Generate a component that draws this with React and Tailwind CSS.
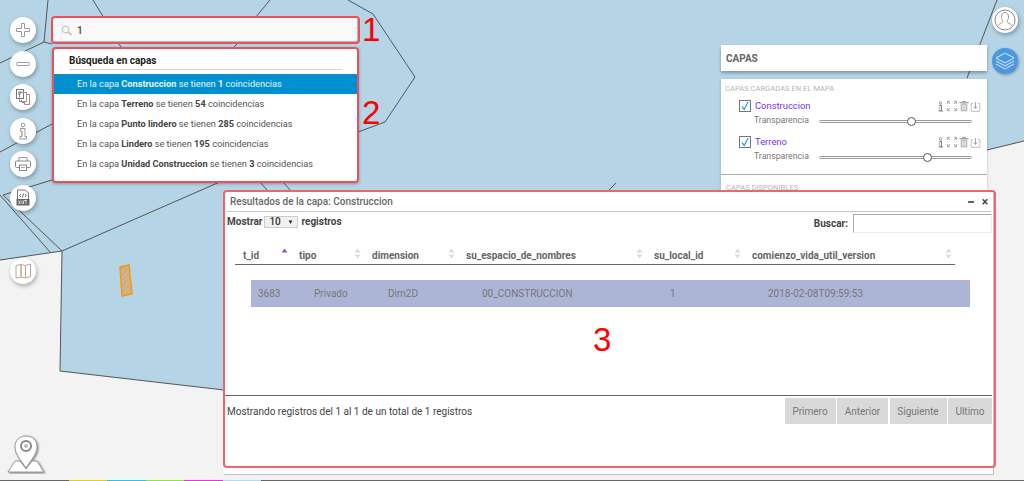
import React from "react";

const MapLines = () => (
  <svg className="absolute inset-0" width="1024" height="481" viewBox="0 0 1024 481">
    <defs>
      <pattern id="hatch" width="4" height="4" patternUnits="userSpaceOnUse" patternTransform="rotate(45)">
        <rect width="4" height="4" fill="#d3b489" />
        <rect width="1" height="4" fill="#cda878" />
      </pattern>
    </defs>
    <polygon points="0,0 1024,0 1024,141 980,152 980,420 224,390 60,371 62,251 0,260" fill="#b5d4e5" />
    <g fill="none" stroke="#555" strokeWidth="1">
      <polyline points="48,0 44,42 0,63" />
      <polyline points="44,42 52,44" />
      <polyline points="93,0 104,18" />
      <polyline points="270,0 255,18" />
      <polyline points="118,43 122,48" />
      <polyline points="238,43 233,48" />
      <polyline points="348,0 373,14 415,77 385,122 358,132" />
      <polyline points="52,124 0,152" />
      <polyline points="52,180 3,195 62,251 222,181" />
      <polyline points="0,195 50,252" />
      <polyline points="0,260 62,251 60,371 224,390" />
      <polyline points="260,182 267,190" />
      <polyline points="283,182 290,190" />
      <polyline points="608,191 616,183" />
      <polyline points="997,0 967,78" />
      <polyline points="987,150 1024,141" />
    </g>
    <polygon points="120,267 129,265 132,294 122,296" fill="url(#hatch)" stroke="#f59a16" strokeWidth="1.500" />
  </svg>
);

const Ic = ({ children, size = 18 }) => (
  <svg width={size} height={size} viewBox="0 0 18 18" fill="none" strokeWidth="1" className="shrink-0">
    {children}
  </svg>
);

const RoundBtn = ({ children, className = "" }) => (
  <div className={`w-[26px] h-[26px] rounded-full bg-white shadow-[1px_2px_4px_rgba(0,0,0,0.3)] flex items-center justify-center ${className}`}>
    {children}
  </div>
);

const LeftTools = () => (
  <div className="absolute left-[10px] top-[17px] flex flex-col gap-[7.6px]">
    <RoundBtn>
      <Ic><path d="M7.500 2.500h3v5h5v3h-5v5h-3v-5h-5v-3h5z" stroke="#9a9a9a" /></Ic>
    </RoundBtn>
    <RoundBtn>
      <Ic><rect x="2.500" y="7.500" width="13" height="3" rx="1" stroke="#9a9a9a" /></Ic>
    </RoundBtn>
    <RoundBtn>
      <Ic>
        <rect x="2.500" y="1.500" width="7" height="9" stroke="#777" />
        <rect x="5.500" y="4.500" width="7" height="9" stroke="#999" />
        <path d="M12.500 6.500h3v10h-5v-3" stroke="#d9776f" />
        <path d="M4 4h4M4 6h3" stroke="#888" />
        <path d="M7 12l2 3 2-1" stroke="#777" />
      </Ic>
    </RoundBtn>
    <RoundBtn>
      <Ic>
        <circle cx="9" cy="3" r="1.800" stroke="#999" />
        <path d="M6.500 6.500h4.500v8h1.500v2.500h-6.500v-2.500h2v-5.500h-1.500z" stroke="#999" />
        <path d="M7.500 10v4" stroke="#e3a36a" />
      </Ic>
    </RoundBtn>
    <RoundBtn>
      <Ic>
        <path d="M5 6V2.500h8V6" stroke="#999" />
        <rect x="1.500" y="6" width="15" height="6.500" rx="1" stroke="#888" />
        <rect x="5.500" y="10" width="7" height="5.500" fill="#fff" stroke="#888" />
        <path d="M7 12.500h4" stroke="#aaa" />
      </Ic>
    </RoundBtn>
    <RoundBtn>
      <Ic>
        <path d="M3.500 1h8l3 3v9h-11z" stroke="#777" />
        <path d="M7 5L5.500 6.500 7 8M11 5l1.500 1.500L11 8M9.700 4.500L8.300 8.500" stroke="#666" />
        <rect x="2.500" y="10" width="13" height="6.500" fill="#666" />
        <path d="M4.500 11.500l2 3.500M6.500 11.500l-2 3.500M8 11.500v3.500M9.500 11.500v3.500M12 11.500v3.500M10 11.500h3" stroke="#fff" strokeWidth="0.700" />
      </Ic>
    </RoundBtn>
    <RoundBtn className="mt-[39px]">
      <Ic>
        <path d="M2 3.500l5-1v12.500l-5 1z" stroke="#aaa" />
        <path d="M7 2.500l4.500 1v12.500l-4.500-1z" stroke="#e3a36a" />
        <path d="M11.500 3.500l5-1.500v12.500l-5 1.500z" stroke="#aaa" />
      </Ic>
    </RoundBtn>
  </div>
);

const MapLogo = () => (
  <svg className="absolute left-[6px] top-[434px]" width="40" height="40" viewBox="0 0 40 40" fill="none">
    <g style={{ filter: "drop-shadow(1px 1px 1px rgba(0,0,0,0.45))" }}>
      <path d="M9 27L2 38h36l-7-11h-5l-6 8-6-8z" fill="#fff" stroke="#999" strokeWidth="1" />
      <path d="M20 34C16 27 9 21 9 12.500C9 6 14 2 20 2s11 4 11 10.500C31 21 24 27 20 34z" fill="#fff" stroke="#999" strokeWidth="1" />
      <circle cx="20" cy="12" r="5" fill="#fff" stroke="#888" strokeWidth="2" />
      <circle cx="20" cy="12" r="2" fill="#bbb" />
    </g>
  </svg>
);

const SearchBox = () => (
  <div className="absolute left-[51px] top-[16px] w-[309px] h-[28px] border-2 border-[#e9525c] rounded-[4px] bg-[#f9f9f9] shadow-[inset_-1px_-1px_1px_rgba(100,110,130,0.5)] flex items-center pl-[8px] gap-[5px]">
    <svg width="11" height="11" viewBox="0 0 11 11" fill="none" stroke="#c8c8c8" strokeWidth="1.300">
      <circle cx="4.500" cy="4.500" r="3.300" />
      <path d="M7 7l3.500 3" strokeWidth="2" />
    </svg>
    <span className="text-[10px] text-[#444] font-medium">1</span>
  </div>
);

const results = [
  ["Construccion", "1"],
  ["Terreno", "54"],
  ["Punto lindero", "285"],
  ["Lindero", "195"],
  ["Unidad Construccion", "3"],
];

const SearchResults = () => (
  <div className="absolute left-[52px] top-[47px] w-[307px] h-[136px] border-2 border-[#e9525c] rounded-[4px] bg-white shadow-[0_1px_3px_rgba(0,0,0,0.3)] flex flex-col">
    <div className="mx-[15px] h-[21px] pt-[2px] border-b border-[#d5d5d5] text-[10px] font-bold text-[#222] flex items-center">
      Búsqueda en capas
    </div>
    <div className="mt-[4px] flex flex-col">
      {results.map(([name, n], i) => (
        <div
          key={name}
          className={`h-[20px] pl-[23px] flex items-center whitespace-pre text-[9.2px] ${i === 0 ? "bg-[#0090d0] text-[#e8f4fb]" : "text-[#555]"}`}
        >
          En la capa <b className={i === 0 ? "" : "text-[#444]"}>{name}</b> se tienen <b className={i === 0 ? "" : "text-[#444]"}>{n}</b> coincidencias
        </div>
      ))}
    </div>
  </div>
);

const MiniIcons = () => (
  <div className="flex items-center justify-between w-[45px] mr-[7px] shrink-0">
    <Ic size={11}>
      <circle cx="9" cy="3" r="2" stroke="#999" strokeWidth="1.500" />
      <path d="M7 7h3.500v8M6 16h7" stroke="#888" strokeWidth="2" />
      <path d="M7 9v6" stroke="#e0b060" strokeWidth="1.500" />
    </Ic>
    <Ic size={12}>
      <path d="M2 6V2h4M12 2h4v4M16 12v4h-4M6 16H2v-4M3 3l3 3M15 3l-3 3M15 15l-3-3M3 15l3-3" stroke="#999" strokeWidth="1.300" />
    </Ic>
    <Ic size={12}>
      <path d="M2 4h14M7 4V2h4v2" stroke="#999" strokeWidth="1.500" />
      <path d="M4 5h10v12H4z" fill="#bbb" />
      <path d="M7 7v8M9 7v8M11 7v8" stroke="#fff" />
    </Ic>
    <Ic size={11}>
      <path d="M5 4H2v13h14V4h-3" stroke="#bbb" strokeWidth="1.500" />
      <path d="M9 2v10M6 9l3 3 3-3" stroke="#999" strokeWidth="1.500" />
    </Ic>
  </div>
);

const LayerRow = ({ name, thumb, className = "" }) => (
  <div className={`flex flex-col ${className}`}>
    <div className="h-[14px] flex items-center">
      <div className="ml-[18px] w-[12px] h-[12px] border border-[#777] bg-white flex items-center justify-center shrink-0">
        <svg width="10" height="10" viewBox="0 0 10 10" fill="none" stroke="#2aa6ea" strokeWidth="1.300">
          <path d="M2 5.500l2.200 3L8 1" />
        </svg>
      </div>
      <span className="ml-[4px] flex-1 text-[9.4px] text-[#7a2ff5]">{name}</span>
      <MiniIcons />
    </div>
    <div className="h-[14px] mt-[1px] flex items-center">
      <span className="ml-[33px] w-[65px] text-[8.7px] text-[#777]">Transparencia</span>
      <div className="relative w-[153px] h-[3px] rounded-full border border-[#999] bg-white">
        <div
          className="absolute top-[-4px] w-[9px] h-[9px] rounded-full border border-[#555] bg-white"
          style={{ left: thumb }}
        />
      </div>
    </div>
  </div>
);

const CapasPanel = () => (
  <div className="absolute left-[721px] top-[45px] w-[266px] flex flex-col gap-[8px]">
    <div className="h-[26px] bg-white shadow-[0_2px_3px_rgba(0,0,0,0.3)] flex items-center pl-[5px] text-[10px] font-bold text-[#666]">
      CAPAS
    </div>
    <div className="bg-white h-[145px] shadow-[0_1px_3px_rgba(0,0,0,0.2)] flex flex-col">
      <div className="h-[20px] pl-[4px] flex items-center text-[7.6px] text-[#b5b5b5]">CAPAS CARGADAS EN EL MAPA</div>
      <LayerRow name="Construccion" thumb="87px" />
      <LayerRow name="Terreno" thumb="103px" className="mt-[7px]" />
      <div className="mt-[10px] border-t border-[#aaa] pl-[5px] pt-[7px] text-[7.6px] text-[#b5b5b5]">CAPAS DISPONIBLES</div>
    </div>
  </div>
);

const UserBtn = () => (
  <div className="absolute left-[992px] top-[7px] flex flex-col gap-[15px]">
    <RoundBtn>
      <svg width="22" height="22" viewBox="0 0 22 22" fill="none">
        <circle cx="11" cy="11" r="10" stroke="#888" />
        <path d="M7.500 8c0-3 1.500-4.500 3.500-4.500S14.500 5 14.500 8c0 2-1 3.500-1.500 4.500 0 1.500 3.500 2 5 4" stroke="#999" />
        <path d="M7.500 8c0 2 1 3.500 1.500 4.500 0 1.500-3.500 2-5 4" stroke="#d9a070" />
      </svg>
    </RoundBtn>
    <div className="w-[26px] h-[26px] rounded-full bg-[#4a98e2] shadow-[1px_1px_3px_rgba(0,0,0,0.3)] flex items-center justify-center">
      <svg width="22" height="22" viewBox="0 0 22 22" fill="none" stroke="#dcebfa" strokeWidth="1">
        <path d="M11 3l9 5-9 5-9-5z" />
        <path d="M2 11l9 5 9-5" />
        <path d="M2 14l9 5 9-5" />
      </svg>
    </div>
  </div>
);

const Sort = ({ asc }) => (
  <svg width="7" height="11" viewBox="0 0 7 11" className="shrink-0">
    <path d="M3.500 0.500L6.500 4.500h-6z" fill={asc ? "#7a5fd0" : "#dcdcdc"} />
    {!asc && <path d="M3.500 10.500L6.500 6.500h-6z" fill="#dcdcdc" />}
  </svg>
);

const columns = [
  ["t_id", "3683"],
  ["tipo", "Privado"],
  ["dimension", "Dim2D"],
  ["su_espacio_de_nombres", "00_CONSTRUCCION"],
  ["su_local_id", "1"],
  ["comienzo_vida_util_version", "2018-02-08T09:59:53"],
];

const ResultsWindow = () => (
  <div className="absolute left-[224px] top-[191px] w-[770px] h-[284px] bg-white border-b border-r border-[#c0c0c0]">
    <div className="mx-[2px] h-[21px] pt-[1px] border-b border-[#c8c8c8] flex items-center justify-between pl-[4px] pr-[3px]">
      <span className="text-[10px] font-medium text-[#666]">Resultados de la capa: Construccion</span>
      <div className="flex items-center gap-[8px]">
        <div className="w-[6px] h-[2px] bg-[#666]" />
        <span className="text-[12px] leading-none font-bold text-[#444]">×</span>
      </div>
    </div>
    <div className="flex items-start justify-between pl-[3px] pr-[1px]">
      <div className="flex items-center mt-[3px] h-[13px] text-[10px] font-bold text-[#444]">
        Mostrar
        <div className="ml-[2px] w-[34px] h-[12px] border border-[#ccc] bg-[#f0f0f0] flex items-center justify-between px-[4px]">
          <span className="text-[10px] text-[#333] font-medium">10</span>
          <span className="text-[6px] text-[#222]">▼</span>
        </div>
        <span className="ml-[3px]">registros</span>
      </div>
      <div className="flex items-center mt-[2px] text-[10px] font-bold text-[#444]">
        Buscar:
        <div className="ml-[5px] w-[139px] h-[19px] border border-[#aaa] border-r-[#eee] border-b-[#eee] bg-white" />
      </div>
    </div>
    <div className="grid grid-cols-[56px_73px_94px_188px_98px_1fr] ml-[11px] w-[720px] mt-[15px] h-[17px] border-b border-[#666] text-[10px] font-bold text-[#666]">
      {columns.map(([h], i) => (
        <div key={h} className="pl-[8px] pr-[3px] flex items-start justify-between">
          <span>{h}</span>
          <Sort asc={i === 0} />
        </div>
      ))}
    </div>
    <div className="grid grid-cols-[56px_74px_94px_188px_98px_1fr] ml-[27px] w-[719px] mt-[15px] h-[27px] bg-[#adb5d6] items-center text-[10px] text-[#777]">
      {columns.map(([h, v]) => (
        <div key={h} className="pl-[7px]">{v}</div>
      ))}
    </div>
    <div className="mt-[88px] mx-[1px] h-[30px] border-t border-[#666] flex items-start justify-between pt-[2px]">
      <span className="ml-[2px] mt-[6px] text-[10px] text-[#444]">Mostrando registros del 1 al 1 de un total de 1 registros</span>
      <div className="flex gap-[1.5px]">
        {[["Primero", "w-[51px]"], ["Anterior", "w-[51px]"], ["Siguiente", "w-[57px]"], ["Ultimo", "w-[44px]"]].map(([t, w]) => (
          <div key={t} className={`${w} h-[26px] bg-[#d9d9d9] text-[10px] text-[#777] flex items-center justify-center`}>{t}</div>
        ))}
      </div>
    </div>
  </div>
);

const ResultsOutline = () => (
  <div className="absolute left-[223px] top-[190px] w-[773px] h-[278px] border-2 border-[#f0646a] rounded-[4px] pointer-events-none" />
);

const BottomBar = () => (
  <div className="absolute left-0 right-0 bottom-0 h-[1.5px] flex">
    <div className="w-[69px] bg-[#666]" />
    <div className="w-[38px] bg-[#e4cf10]" />
    <div className="w-[39px] bg-[#22c6e8]" />
    <div className="w-[38px] bg-[#8ee63c]" />
    <div className="w-[39px] bg-[#f02ee0]" />
    <div className="w-[38px] bg-[#a8e0f0]" />
    <div className="flex-1 bg-[#666]" />
  </div>
);

const Mark = ({ className, children }) => (
  <span className={`absolute font-['Liberation_Sans',sans-serif] text-[33px] leading-none text-[#f00] ${className}`}>{children}</span>
);

export default function App() {
  return (
    <div className="relative w-[1024px] h-[481px] overflow-hidden bg-[#f3f3f3] font-['Roboto',sans-serif]">
      <MapLines />
      <LeftTools />
      <MapLogo />
      <SearchBox />
      <SearchResults />
      <CapasPanel />
      <UserBtn />
      <ResultsWindow />
      <ResultsOutline />
      <BottomBar />
      <Mark className="left-[362px] top-[13px]">1</Mark>
      <Mark className="left-[362px] top-[96px]">2</Mark>
      <Mark className="left-[593px] top-[323px]">3</Mark>
    </div>
  );
}
